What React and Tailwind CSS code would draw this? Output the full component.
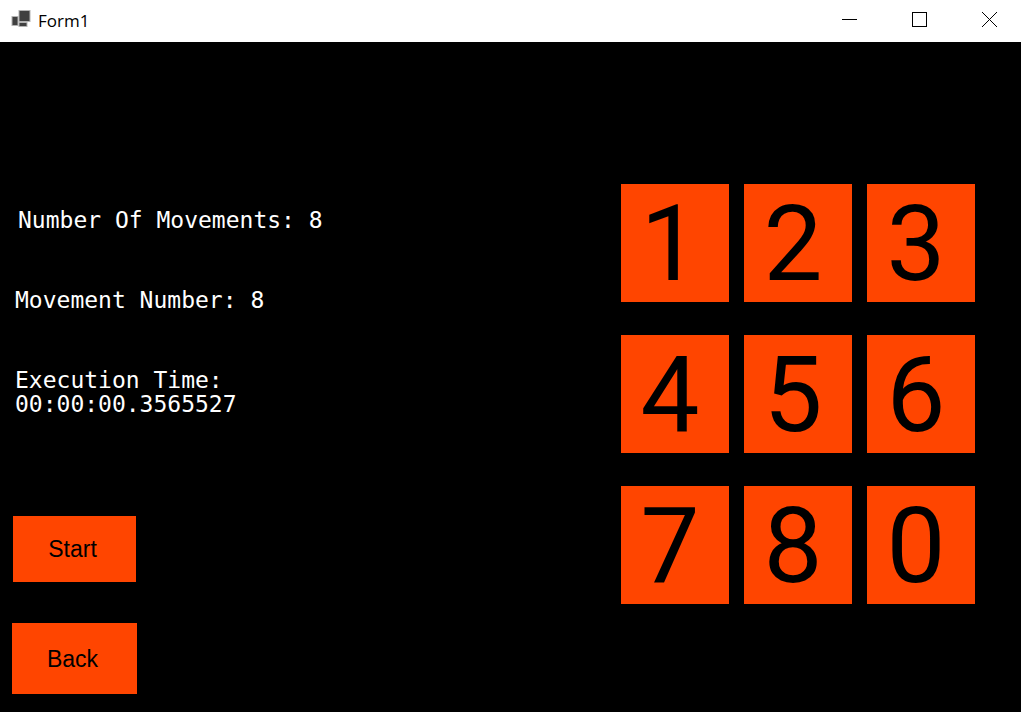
const tiles = [1, 2, 3, 4, 5, 6, 7, 8, 0];

function AppIcon() {
  return (
    <svg width="20" height="18" viewBox="0 0 20 18" aria-hidden="true">
      <g fill="#404040" stroke="#b4b4b4" strokeWidth="1">
        <rect x="8" y="0.5" width="11" height="11" />
        <rect x="1" y="6.5" width="6" height="9" />
        <rect x="8" y="12.5" width="8" height="4" />
      </g>
    </svg>
  );
}

function TitleBar() {
  return (
    <header className="flex h-[42px] items-center overflow-hidden bg-white pl-[11px] text-black">
      <div className="pb-1">
        <AppIcon />
      </div>
      <h1 className="ml-[7px] font-['Open_Sans',sans-serif] text-[17px] leading-6">Form1</h1>
      <div className="ml-auto flex h-full items-stretch pr-1 pb-[3px]">
        <button type="button" aria-label="Minimize" className="flex w-[70px] items-center justify-center">
          <svg width="15" height="15" viewBox="0 0 15 15" shapeRendering="crispEdges">
            <path d="M0 7.5H15" stroke="#000" />
          </svg>
        </button>
        <button type="button" aria-label="Maximize" className="flex w-[70px] items-center justify-center">
          <svg width="15" height="15" viewBox="0 0 15 15" fill="none" shapeRendering="crispEdges">
            <rect x="0.5" y="0.5" width="14" height="14" stroke="#000" />
          </svg>
        </button>
        <button type="button" aria-label="Close" className="flex w-[63px] items-center justify-center pl-[7px]">
          <svg width="15" height="15" viewBox="0 0 15 15" fill="none">
            <path d="M0 0L15 15M15 0L0 15" stroke="#000" />
          </svg>
        </button>
      </div>
    </header>
  );
}

export default function App() {
  return (
    <div className="flex min-h-screen flex-col bg-black">
      <TitleBar />
      <main className="flex flex-1 items-start justify-between pr-[46px] pl-3">
        <section className="pt-[166px] font-['Liberation_Sans',Arial,sans-serif]">
          <div className="space-y-14 pl-[3px] font-['DejaVu_Sans_Mono',monospace] text-[23px] leading-6 text-white">
            <p className="pl-[3px]">Number Of Movements: 8</p>
            <p>Movement Number: 8</p>
            <p>
              Execution Time:
              <br />
              00:00:00.3565527
            </p>
          </div>
          <div className="mt-[100px] flex flex-col items-start gap-[41px] text-[23px] leading-7 text-black">
            <button type="button" className="ml-px h-[66px] w-[123px] bg-[#ff4500] pr-1 pb-px">
              Start
            </button>
            <button type="button" className="h-[71px] w-[125px] bg-[#ff4500] pr-1">
              Back
            </button>
          </div>
        </section>
        <section
          aria-label="Puzzle board"
          className="mt-[142px] grid grid-cols-3 gap-x-[15px] gap-y-[33px] font-['Roboto',sans-serif] text-[105px] text-black"
        >
          {tiles.map((n) => (
            <div
              key={n}
              className="flex h-[118px] w-[108px] items-center justify-center bg-[#ff4500] pt-[3px] pr-[10px] leading-none"
            >
              {n}
            </div>
          ))}
        </section>
      </main>
    </div>
  );
}
